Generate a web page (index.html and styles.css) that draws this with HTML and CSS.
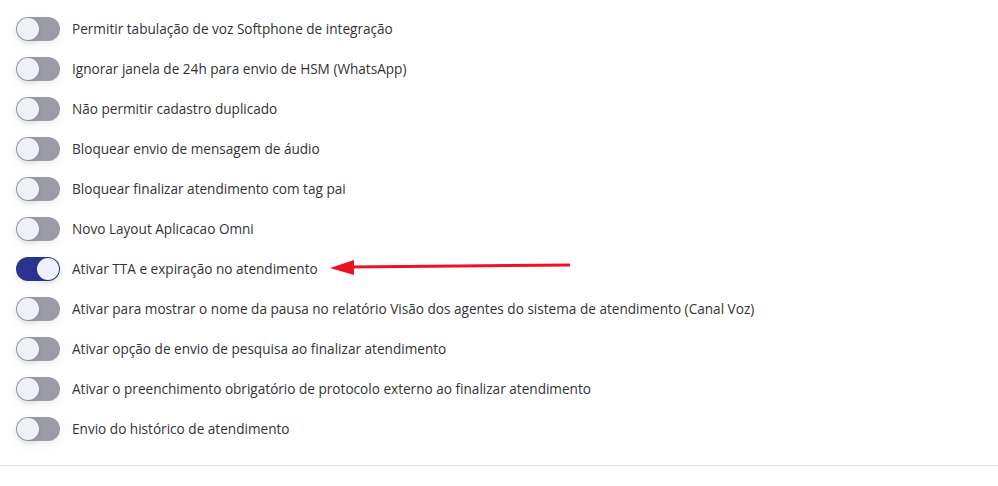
FILE: index.html
```html
<!DOCTYPE html>
<html lang="pt-BR">
<head>
<meta charset="utf-8">
<link rel="stylesheet" href="styles.css">
</head>
<body>
<div class="page">
  <ul class="list">
    <li class="row"><span class="toggle"><span class="knob"></span></span><span class="label">Permitir tabulação de voz Softphone de integração</span></li>
    <li class="row"><span class="toggle"><span class="knob"></span></span><span class="label">Ignorar janela de 24h para envio de HSM (WhatsApp)</span></li>
    <li class="row"><span class="toggle"><span class="knob"></span></span><span class="label">Não permitir cadastro duplicado</span></li>
    <li class="row"><span class="toggle"><span class="knob"></span></span><span class="label">Bloquear envio de mensagem de áudio</span></li>
    <li class="row"><span class="toggle"><span class="knob"></span></span><span class="label">Bloquear finalizar atendimento com tag pai</span></li>
    <li class="row"><span class="toggle"><span class="knob"></span></span><span class="label">Novo Layout Aplicacao Omni</span></li>
    <li class="row"><span class="toggle on"><span class="knob"></span></span><span class="label">Ativar TTA e expiração no atendimento</span></li>
    <li class="row"><span class="toggle"><span class="knob"></span></span><span class="label">Ativar para mostrar o nome da pausa no relatório Visão dos agentes do sistema de atendimento (Canal Voz)</span></li>
    <li class="row"><span class="toggle"><span class="knob"></span></span><span class="label">Ativar opção de envio de pesquisa ao finalizar atendimento</span></li>
    <li class="row"><span class="toggle"><span class="knob"></span></span><span class="label">Ativar o preenchimento obrigatório de protocolo externo ao finalizar atendimento</span></li>
    <li class="row"><span class="toggle"><span class="knob"></span></span><span class="label">Envio do histórico de atendimento</span></li>
  </ul>
  <div class="divider"></div>
  <svg class="arrow" width="250" height="20" viewBox="0 0 250 20">
    <line x1="20" y1="10" x2="240" y2="8" stroke="#ee1122" stroke-width="3"/>
    <polygon points="0,11 24,3 24,18" fill="#ee1122"/>
  </svg>
</div>
</body>
</html>
```
FILE: styles.css
```css
* { box-sizing: border-box; }
html, body { margin: 0; padding: 0; background: #fff; }
body {
  font-family: "Open Sans", "Noto Sans", "Liberation Sans", sans-serif;
  font-size: 13.6px;
  color: #333336;
}
.page {
  position: relative;
  width: 998px;
  height: 486px;
  padding-top: 17px;
}
.list {
  list-style: none;
  margin: 0;
  padding: 0 0 0 16px;
  display: flex;
  flex-direction: column;
  gap: 16px;
}
.row {
  display: flex;
  align-items: center;
  gap: 12px;
  height: 24px;
}
.toggle {
  position: relative;
  flex: none;
  width: 44px;
  height: 24px;
  border-radius: 12px;
  background: #9a9ba6;
  box-shadow: 0 4px 10px rgba(0,0,0,0.06);
}
.toggle.on { background: #2a3490; }
.knob {
  position: absolute;
  top: 1px;
  left: 1px;
  width: 22px;
  height: 22px;
  border-radius: 50%;
  background: #eef1f8;
  box-shadow: 0 2px 6px rgba(0,0,0,0.12);
}
.toggle.on .knob { left: 21px; }
.label { line-height: 20px; }
.divider {
  margin-top: 24px;
  height: 1px;
  background: #e4e4e6;
}
.arrow {
  position: absolute;
  left: 330px;
  top: 257px;
}
```
